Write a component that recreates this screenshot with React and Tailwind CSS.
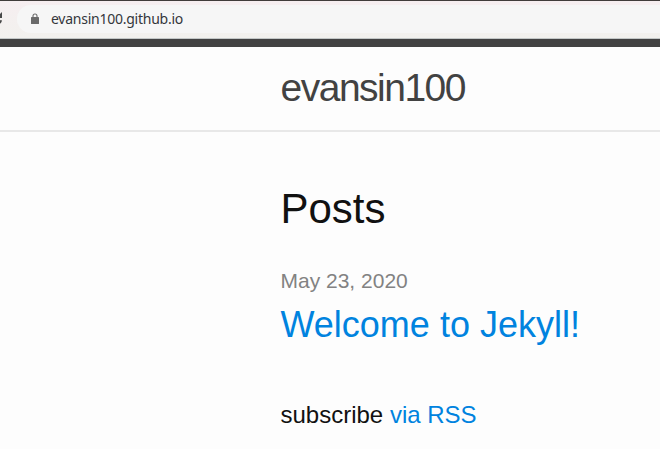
function BrowserBar() {
  return (
    <div className="flex h-[39px] flex-col border-t border-t-[#403c3a] border-b border-b-[#c3c7c7] bg-[#f2f1ef] bg-linear-to-b from-[#f6eef0] to-[#f2f1ee]">
      <div className="mt-1 flex items-center">
        <svg className="h-7 w-[17px] shrink-0" viewBox="0 0 17 28" fill="none">
          <path d="M2 7V13H-4Z" fill="#484848" />
          <path d="M-3 18.6C-0.8 18.6 0.6 17.4 1.2 15.2" stroke="#484848" strokeWidth="1.8" />
        </svg>
        <div className="flex h-7 flex-1 items-center rounded-l-full bg-[#f6f6f6] pl-[14px]">
          <svg className="h-[12px] w-[8px] shrink-0" viewBox="0 0 8 12" fill="none">
            <path d="M2 4.8V3a2 2 0 0 1 4 0V4.8" stroke="#6a6a6a" strokeWidth="1.1" />
            <rect y="4" width="8" height="7" rx="0.6" fill="#6a6a6a" />
          </svg>
          <span className="ml-[12px] text-[14px] leading-7 tracking-[-0.25px] text-[#34373b] font-['Noto_Sans',sans-serif]">
            evansin100.github.io
          </span>
        </div>
      </div>
    </div>
  );
}

export default function App() {
  return (
    <div className="h-[449px] w-[660px] overflow-hidden bg-[#fdfdfd] text-[#111] font-['Liberation_Sans',sans-serif]">
      <BrowserBar />
      <header className="h-[93px] border-t-8 border-b-2 border-t-[#424242] border-b-[#e8e8e8] pl-[280.5px]">
        <a className="text-[39px] leading-[81px] tracking-[-1.5px] text-[#424242]">evansin100</a>
      </header>
      <main className="pt-[45px] pl-[280.5px]">
        <h2 className="text-[42px] leading-[63px]">Posts</h2>
        <div className="mt-[25px] text-[21px] leading-[32px] text-[#828282]">May 23, 2020</div>
        <h3 className="mt-px text-[36px] leading-[54px] text-[#0083df]">Welcome to Jekyll!</h3>
        <p className="mt-[45px] text-[24px] leading-[36px]">
          subscribe <a className="text-[#0083df]">via RSS</a>
        </p>
      </main>
    </div>
  );
}
